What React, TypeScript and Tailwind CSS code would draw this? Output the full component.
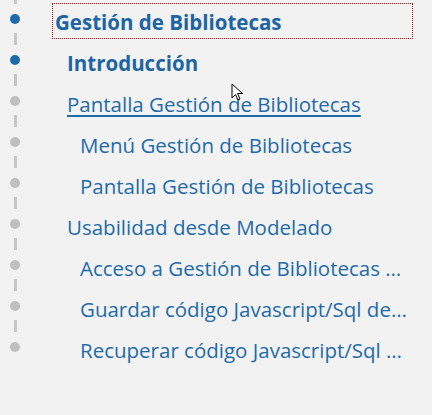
import React from "react";

type Item = {
  label: string;
  level: 0 | 1 | 2;
  done?: boolean;
  bold?: boolean;
  current?: boolean;
  hover?: boolean;
};

const items: Item[] = [
  { label: "Gestión de Bibliotecas", level: 0, done: true, bold: true, current: true },
  { label: "Introducción", level: 1, done: true, bold: true },
  { label: "Pantalla Gestión de Bibliotecas", level: 1, hover: true },
  { label: "Menú Gestión de Bibliotecas", level: 2 },
  { label: "Pantalla Gestión de Bibliotecas", level: 2 },
  { label: "Usabilidad desde Modelado", level: 1 },
  { label: "Acceso a Gestión de Bibliotecas desde Modelado", level: 2 },
  { label: "Guardar código Javascript/Sql desde Modelado", level: 2 },
  { label: "Recuperar código Javascript/Sql desde Modelado", level: 2 },
];

function Cursor() {
  return (
    <svg
      className="absolute left-[231px] top-[83px] pointer-events-none"
      width="14"
      height="20"
      viewBox="0 0 14 20"
    >
      <path
        d="M1 1 L1 15 L4.5 11.5 L7 17 L9 16 L6.5 10.5 L11.5 10.5 Z"
        fill="#ffffff"
        stroke="#000000"
        strokeWidth="1"
      />
    </svg>
  );
}

export default function App() {
  return (
    <div className="relative min-h-[415px] w-full bg-[#f2f2f2] font-['Open_Sans',sans-serif] overflow-hidden">
      <ul className="flex flex-col">
        {items.map((item, i) => {
          const last = i === items.length - 1;
          const pad =
            item.level === 0 ? "pl-[2px]" : item.level === 1 ? "pl-[15px]" : "pl-[28px]";
          return (
            <li key={i} className="flex h-[41px] pr-[19px]">
              {/* Timeline */}
              <div className="flex w-[30px] shrink-0 flex-col items-center">
                <div className="h-[4px] w-[3px] bg-[#c6c6c6]" />
                <div
                  className={`mt-[10px] h-[10px] w-[10px] rounded-full ${
                    item.done ? "bg-[#1f6aa8]" : "bg-[#c0c0c0]"
                  }`}
                />
                {!last && <div className="mt-auto h-[8px] w-[3px] bg-[#c6c6c6]" />}
              </div>

              {/* Label */}
              <div className="ml-[22px] flex min-w-0 flex-1 items-center">
                <div
                  className={`flex h-[36px] w-full min-w-0 items-center ${pad} ${
                    item.current ? "border border-dotted border-[#d40000]" : ""
                  }`}
                >
                  <span
                    className={`truncate pt-[2px] text-[20.5px] leading-[26px] ${
                      item.bold ? "font-bold text-[#1d64a3]" : "text-[#1f6aa8]"
                    } ${
                      item.hover
                        ? "underline decoration-2 underline-offset-[3px] decoration-[#1f6aa8]"
                        : ""
                    }`}
                  >
                    {item.label}
                  </span>
                </div>
              </div>
            </li>
          );
        })}
      </ul>
      <Cursor />
    </div>
  );
}
